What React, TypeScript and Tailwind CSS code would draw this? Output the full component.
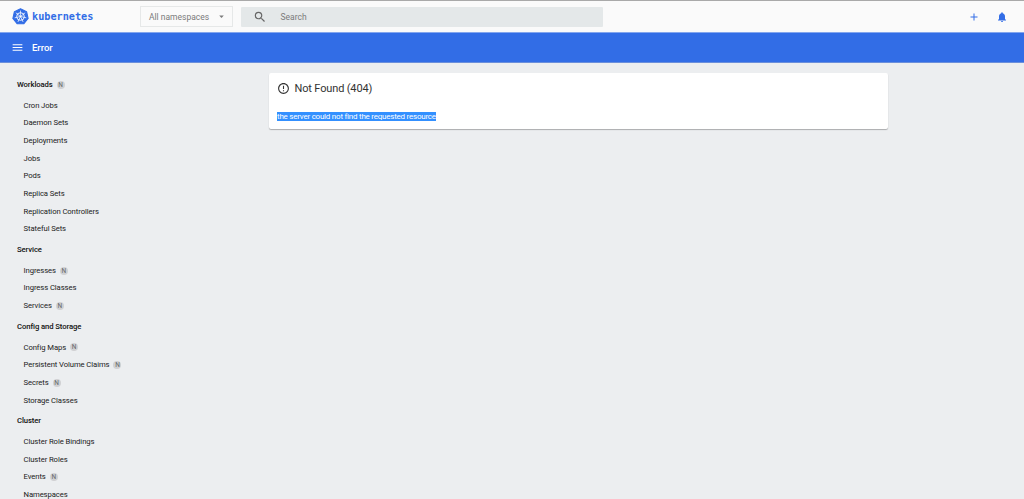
import { MdAdd, MdArrowDropDown, MdErrorOutline, MdMenu, MdNotifications, MdSearch } from 'react-icons/md';

type Entry = { label: string; namespaced?: boolean };
type Section = Entry & { items: Entry[] };

const sections: Section[] = [
  {
    label: 'Workloads',
    namespaced: true,
    items: [
      { label: 'Cron Jobs' },
      { label: 'Daemon Sets' },
      { label: 'Deployments' },
      { label: 'Jobs' },
      { label: 'Pods' },
      { label: 'Replica Sets' },
      { label: 'Replication Controllers' },
      { label: 'Stateful Sets' },
    ],
  },
  {
    label: 'Service',
    items: [
      { label: 'Ingresses', namespaced: true },
      { label: 'Ingress Classes' },
      { label: 'Services', namespaced: true },
    ],
  },
  {
    label: 'Config and Storage',
    items: [
      { label: 'Config Maps', namespaced: true },
      { label: 'Persistent Volume Claims', namespaced: true },
      { label: 'Secrets', namespaced: true },
      { label: 'Storage Classes' },
    ],
  },
  {
    label: 'Cluster',
    items: [
      { label: 'Cluster Role Bindings' },
      { label: 'Cluster Roles' },
      { label: 'Events', namespaced: true },
      { label: 'Namespaces' },
    ],
  },
];

const spokeAngles = Array.from({ length: 7 }, (_, i) => (i * 360) / 7);

function Logo() {
  return (
    <svg viewBox="0 0 32 32" className="size-[17px] shrink-0" aria-hidden="true">
      <path
        d="M16 1.5 27.5 7 30.3 19.4 22.4 29.5H9.6L1.7 19.4 4.5 7Z"
        fill="#326de6"
        stroke="#326de6"
        strokeWidth="2"
        strokeLinejoin="round"
      />
      <circle cx="16" cy="16" r="7.2" fill="none" stroke="#fff" strokeWidth="1.7" />
      {spokeAngles.map((angle) => (
        <path key={angle} d="M16 14V5.5" stroke="#fff" strokeWidth="1.3" strokeLinecap="round" transform={`rotate(${angle} 16 16)`} />
      ))}
      <circle cx="16" cy="16" r="1.8" fill="#fff" />
    </svg>
  );
}

function Badge() {
  return (
    <span className="ml-[4px] flex size-[8px] items-center justify-center rounded-full bg-[#d0d1d3] text-[6.5px] leading-[8px] font-normal tracking-normal text-[#66686b]">
      N
    </span>
  );
}

function TopBar() {
  return (
    <header className="flex h-[32px] shrink-0 items-center border-t border-[#a9a9a9] bg-[#fafafa] pr-[16px] pl-[12px]">
      <Logo />
      <span className="ml-[3px] w-[108px] pt-px font-['DejaVu_Sans_Mono',monospace] text-[10.2px] leading-[14px] font-bold text-[#326de6]">
        kubernetes
      </span>
      <div className="flex h-[21px] w-[93px] items-center justify-between border border-[#e6e8e8] pr-[5px] pl-[8px] text-[8.5px] text-[#7b7b7b]">
        <span className="pt-px leading-[12px]">All namespaces</span>
        <MdArrowDropDown className="size-[11px]" />
      </div>
      <div className="ml-[8px] flex h-[20px] w-[362px] items-center rounded-[1px] bg-[#e4e8e9] pl-[12px] text-[8.5px] text-[#7b7b7b]">
        <MdSearch className="size-[14px] text-[#666]" />
        <span className="ml-[13.5px] pt-px leading-[12px]">Search</span>
      </div>
      <div className="ml-auto flex items-center gap-[16px] text-[#326de6]">
        <MdAdd className="size-[12px]" />
        <MdNotifications className="size-[12px]" />
      </div>
    </header>
  );
}

function Sidebar() {
  return (
    <nav className="w-[268px] shrink-0 pt-[9.8px] pl-[17px] text-[7.7px] tracking-[-0.09px] text-[#212121]">
      {sections.map((section) => (
        <section key={section.label}>
          <h2 className="flex h-[24px] items-center font-medium text-[#111]">
            {section.label}
            {section.namespaced && <Badge />}
          </h2>
          <ul>
            {section.items.map((item) => (
              <li key={item.label} className="flex h-[17.63px] items-center pl-[6.5px] whitespace-nowrap">
                {item.label}
                {item.namespaced && <Badge />}
              </li>
            ))}
          </ul>
        </section>
      ))}
    </nav>
  );
}

export default function App() {
  return (
    <div className="flex h-[499px] w-[1024px] flex-col overflow-hidden bg-[#eceef0] font-[Roboto,sans-serif]">
      <TopBar />
      <div className="flex h-[31px] shrink-0 items-center border-t border-b border-t-[#83a6ee] border-b-[#6b8fdb] bg-[#326de6] pl-[11px] text-white">
        <MdMenu className="size-[13px]" />
        <h1 className="ml-[8px] text-[9.5px] leading-[13px] font-medium">Error</h1>
      </div>
      <div className="flex min-h-0 flex-1">
        <Sidebar />
        <main className="pt-[10px] pl-px">
          <div className="h-[56px] w-[619px] rounded-[2px] bg-white shadow-[0_1px_1px_rgba(0,0,0,0.28)]">
            <div className="flex h-[30px] items-center pl-[8px] text-[#333]">
              <MdErrorOutline className="size-[13px]" />
              <h2 className="ml-[4.5px] pt-px text-[11px] leading-[14px] tracking-[-0.15px]">Not Found (404)</h2>
            </div>
            <p className="flex pt-[9px] pl-[8px] text-[8px] leading-[9px] tracking-[-0.23px]">
              <span className="bg-[#3390ff] text-white">the server could not find the requested resource</span>
            </p>
          </div>
        </main>
      </div>
    </div>
  );
}
